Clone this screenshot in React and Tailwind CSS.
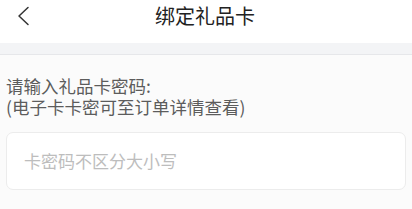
import React from 'react';

export default function App() {
  return (
    <div
      className="w-[412px] h-[209px] overflow-hidden bg-[#fbfbfb]"
      style={{ fontFamily: '"Noto Sans CJK SC", "Noto Sans", sans-serif' }}
    >
      {/* Header */}
      <div className="relative h-[43px] bg-white flex items-center justify-center">
        <button className="absolute left-[14px] top-[5px] w-[18px] h-[22px] flex items-center justify-center">
          <svg width="14" height="20" viewBox="0 0 14 20" fill="none">
            <path d="M12 1.5 L3 10 L12 18.5" stroke="#333" strokeWidth="1.5" strokeLinecap="round" strokeLinejoin="round" />
          </svg>
        </button>
        <h1 className="text-[20px] leading-[20px] text-[#222] -mt-[12px] -ml-[2px]">绑定礼品卡</h1>
      </div>

      {/* Divider strip */}
      <div className="h-[12px] bg-[#f3f4f6] border-b border-[#e6e7ea]" />

      {/* Content */}
      <div className="px-[6px] pt-[20px]">
        <p className="text-[17.5px] leading-[21px] text-[#5c5c5c]">请输入礼品卡密码:</p>
        <p className="text-[17.5px] leading-[21px] text-[#5c5c5c]">(电子卡卡密可至订单详情查看)</p>
        <div className="mt-[15px] h-[58px] bg-white border border-[#ececec] rounded-[7px] flex items-center px-[17px]">
          <input
            className="w-full bg-transparent outline-none text-[17px] text-[#333] placeholder:text-[#bdbdbd]"
            placeholder="卡密码不区分大小写"
          />
        </div>
      </div>
    </div>
  );
}
